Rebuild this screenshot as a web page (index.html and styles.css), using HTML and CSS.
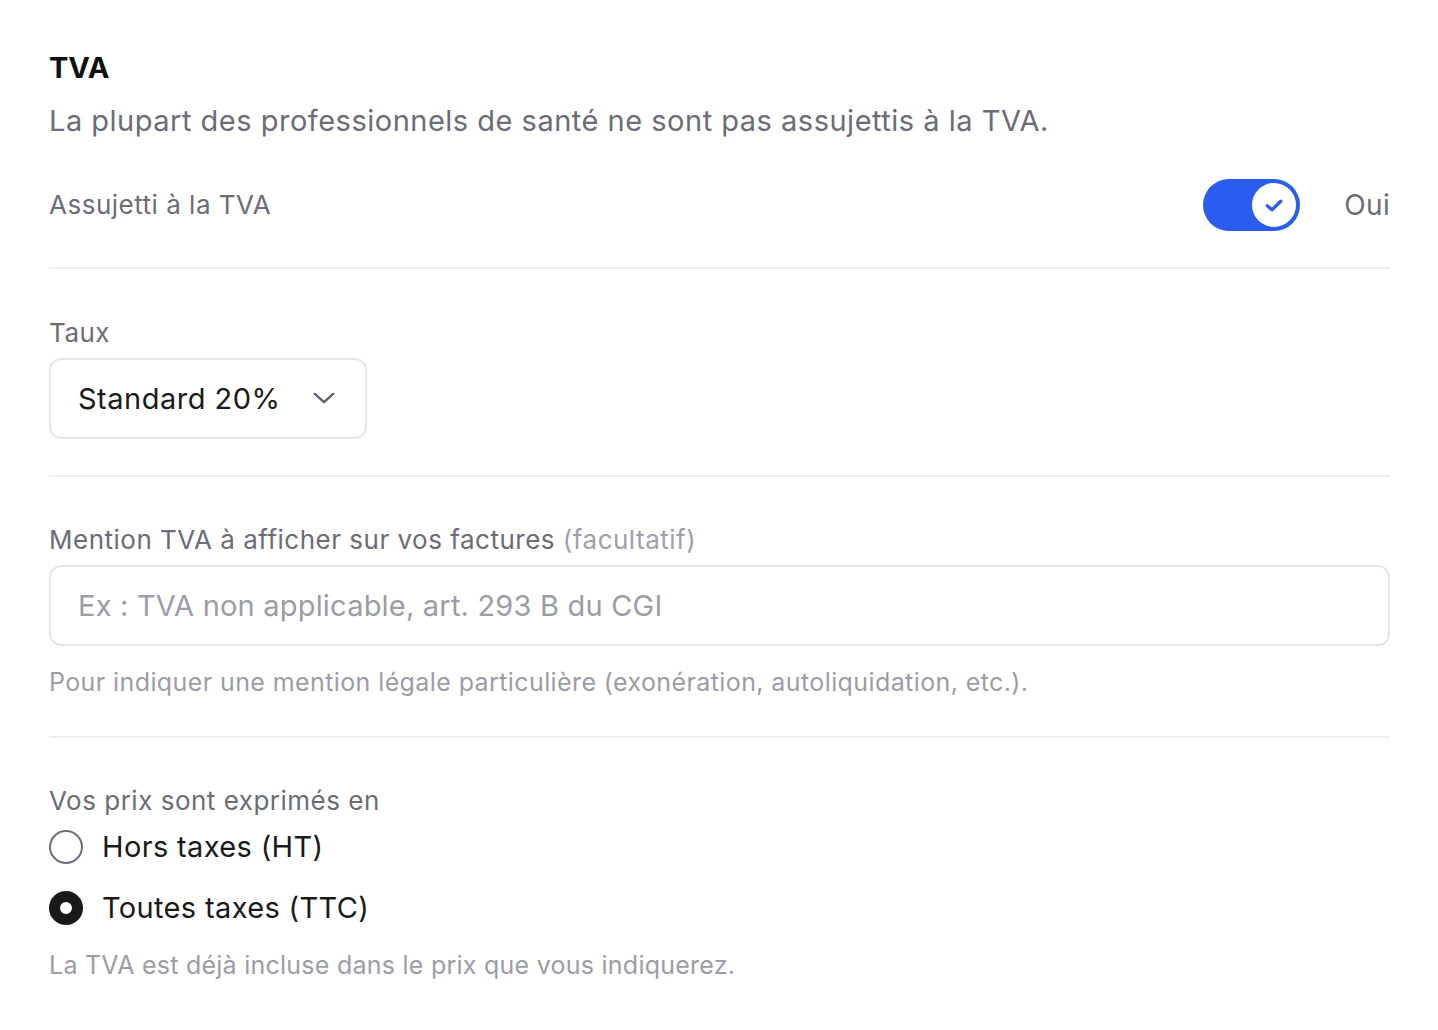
FILE: index.html
```html
<!DOCTYPE html>
<html lang="fr">
<head>
<meta charset="utf-8">
<title>TVA</title>
<link rel="stylesheet" href="styles.css">
</head>
<body>
<main class="page">
  <section class="head">
    <h1 class="title">TVA</h1>
    <p class="subtitle">La plupart des professionnels de santé ne sont pas assujettis à la TVA.</p>
  </section>

  <div class="row toggle-row">
    <span class="label">Assujetti à la TVA</span>
    <div class="toggle-wrap">
      <span class="toggle">
        <span class="knob">
          <svg viewBox="0 0 16 16" width="20" height="20"><path d="M2.6 8.6 L6.4 11.8 L13.4 5" fill="none" stroke="#2b5cf0" stroke-width="2.6" stroke-linecap="round" stroke-linejoin="round"/></svg>
        </span>
      </span>
      <span class="toggle-text">Oui</span>
    </div>
  </div>

  <hr class="divider">

  <section class="field field-taux">
    <span class="label">Taux</span>
    <div class="select">
      <span class="select-value">Standard 20%</span>
      <svg class="chevron" viewBox="0 0 24 14" width="22" height="13"><path d="M2 2 L12 11 L22 2" fill="none" stroke="#5f6070" stroke-width="2.6" stroke-linecap="round" stroke-linejoin="round"/></svg>
    </div>
  </section>

  <hr class="divider">

  <section class="field field-mention">
    <span class="label">Mention TVA à afficher sur vos factures <span class="optional">(facultatif)</span></span>
    <div class="input"><span class="placeholder">Ex : TVA non applicable, art. 293 B du CGI</span></div>
    <p class="help">Pour indiquer une mention légale particulière (exonération, autoliquidation, etc.).</p>
  </section>

  <hr class="divider">

  <section class="field field-prix">
    <span class="label">Vos prix sont exprimés en</span>
    <div class="radios">
      <div class="radio-row"><span class="radio"></span><span class="radio-label">Hors taxes (HT)</span></div>
      <div class="radio-row"><span class="radio checked"></span><span class="radio-label">Toutes taxes (TTC)</span></div>
    </div>
    <p class="help help-prix">La TVA est déjà incluse dans le prix que vous indiquerez.</p>
  </section>
</main>
</body>
</html>
```

FILE: styles.css
```css
* { box-sizing: border-box; }
html, body { margin: 0; padding: 0; background: #ffffff; }
body {
  font-family: Inter, "Noto Sans", "Liberation Sans", sans-serif;
  color: #1a1a1c;
}
.page {
  padding: 50px 48px 40px 49px;
  display: flex;
  flex-direction: column;
}
.title {
  margin: 0;
  font-size: 29px;
  line-height: 36px;
  font-weight: 700;
  color: #111113;
}
.subtitle {
  margin: 15px 0 0;
  font-size: 29px;
  line-height: 40px;
  letter-spacing: 0.5px;
  color: #6b6c78;
}
.label {
  font-size: 26px;
  line-height: 32px;
  letter-spacing: 0.5px;
  color: #6b6c78;
}
.optional { color: #a0a0aa; }
.row {
  display: flex;
  align-items: center;
  justify-content: space-between;
}
.toggle-row { margin-top: 38px; height: 52px; }
.toggle-wrap { display: flex; align-items: center; gap: 44px; }
.toggle {
  width: 97px;
  height: 52px;
  border-radius: 26px;
  background: #2b5cf0;
  display: flex;
  align-items: center;
  justify-content: flex-end;
  padding-right: 4px;
}
.knob {
  width: 44px;
  height: 44px;
  border-radius: 50%;
  background: #fff;
  display: flex;
  align-items: center;
  justify-content: center;
}
.knob svg { display: block; }
.toggle-text {
  font-size: 28px;
  line-height: 40px;
  letter-spacing: 0.3px;
  color: #6b6c78;
}
.divider {
  border: 0;
  height: 2px;
  background: #efeff0;
  margin: 36px 0 0;
}
.field { display: flex; flex-direction: column; align-items: flex-start; }
.field-taux { margin-top: 48px; }
.field-mention { margin-top: 47px; align-items: stretch; }
.field-mention .label { align-self: flex-start; }
.field-prix { margin-top: 47px; }
.select {
  margin-top: 9px;
  width: 318px;
  height: 81px;
  border: 2px solid #e6e6e8;
  border-radius: 12px;
  display: flex;
  align-items: center;
  justify-content: space-between;
  padding: 0 30px 0 27px;
}
.select-value { font-size: 29px; line-height: 40px; letter-spacing: 0.5px; color: #1a1a1c; }
.chevron { display: block; }
.input {
  margin-top: 9px;
  height: 81px;
  border: 2px solid #e6e6e8;
  border-radius: 12px;
  display: flex;
  align-items: center;
  padding: 0 27px;
}
.placeholder { font-size: 29px; line-height: 40px; letter-spacing: 0.2px; color: #9c9ca7; }
.help {
  margin: 20px 0 0;
  font-size: 25px;
  line-height: 32px;
  letter-spacing: 0.4px;
  color: #9c9ca7;
}
.field-mention + .divider { margin-top: 38px; }
.radios { margin-top: 10px; display: flex; flex-direction: column; gap: 21px; }
.radio-row { display: flex; align-items: center; gap: 19px; height: 40px; }
.radio {
  width: 34px;
  height: 34px;
  border-radius: 50%;
  border: 2px solid #6e6f7c;
  background: #fff;
}
.radio.checked {
  border: 11px solid #19191b;
  background: #fff;
}
.radio-label { font-size: 29px; line-height: 40px; letter-spacing: 0.35px; color: #1a1a1c; }
.help-prix { margin-top: 21px; letter-spacing: 0.25px; }
```
